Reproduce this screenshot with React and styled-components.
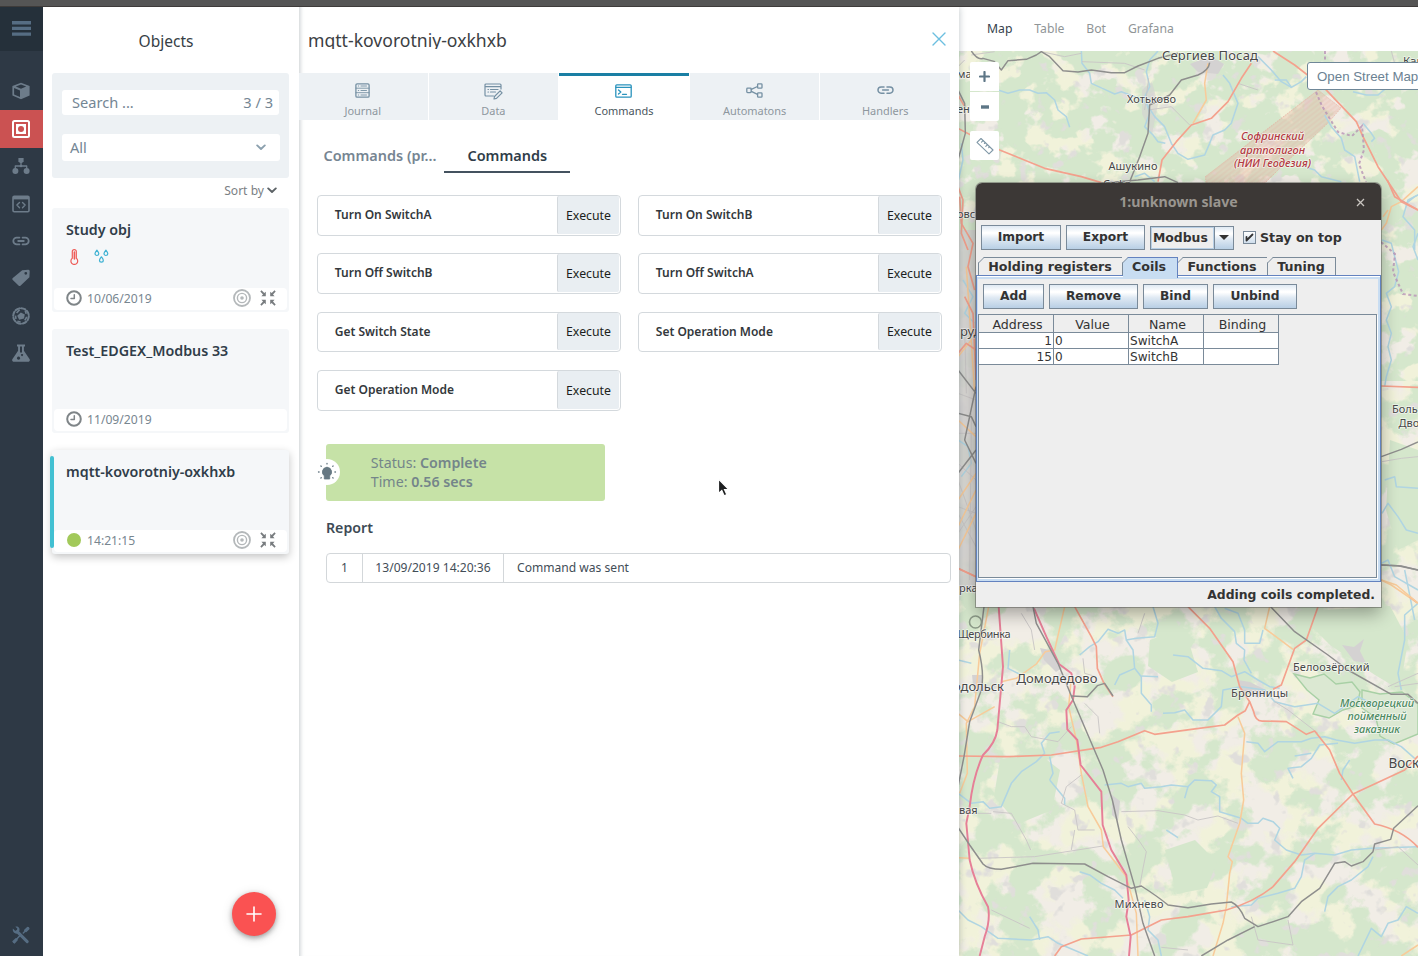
import React from "react";
import styled, { createGlobalStyle, css } from "styled-components";

const sans = `"Noto Sans", "Open Sans", sans-serif`;

const GlobalStyle = createGlobalStyle`
  * { box-sizing: border-box; }
  body { margin: 0; overflow: hidden; font-family: ${sans}; font-size: 14px; color: #3b4650; background: #fff; }
  button, input { font-family: inherit; }
`;

/* ---------- page frame ---------- */

const Page = styled.div`
  position: relative;
  display: flex;
  flex-direction: column;
  width: 1418px;
  height: 956px;
  overflow: hidden;
`;

const BrowserEdge = styled.div`
  flex: none;
  height: 7px;
  background: #555;
  border-bottom: 1px solid #3e3b3a;
`;

const Columns = styled.div`
  flex: 1;
  display: flex;
  min-height: 0;
`;

/* ---------- sidebar ---------- */

const Sidebar = styled.nav`
  flex: none;
  width: 43px;
  display: flex;
  flex-direction: column;
  background: #2e3945;
  color: #6d7c8a;
`;

const MenuButton = styled.div`
  height: 44px;
  padding: 0 0 1px;
  display: flex;
  align-items: center;
  justify-content: center;
  background: #25303a;
  color: #566d83;
  margin-bottom: 22px;
`;

const NavItem = styled.div`
  height: 37.4px;
  padding: 0 1px 0.6px 0;
  display: flex;
  align-items: center;
  justify-content: center;
  ${(p) => p.$active && css`background: #cb5252; color: #fff;`}
`;

const SidebarFooter = styled.div`
  margin-top: auto;
  height: 42px;
  padding-right: 2px;
  display: flex;
  justify-content: center;
  align-items: center;
  color: #566d83;
`;

/* ---------- objects list ---------- */

const ObjectsPanel = styled.section`
  position: relative;
  flex: none;
  width: 256px;
  padding: 0 10px 0 9px;
  display: flex;
  flex-direction: column;
  background: #fff;
`;

const PanelTitle = styled.h1`
  margin: 0;
  height: 66px;
  padding: 1px 9px 0 0;
  line-height: 66px;
  text-align: center;
  font-size: 15.5px;
  font-weight: 400;
  color: #363e45;
`;

const Filters = styled.div`
  height: 105px;
  padding: 17px 9px 17px 10px;
  display: flex;
  flex-direction: column;
  justify-content: space-between;
  background: #edf1f4;
  border-radius: 3px;
`;

const FilterField = styled.div`
  height: ${(p) => p.$height}px;
  padding: ${(p) => p.$pad};
  margin-right: ${(p) => p.$inset || 0}px;
  display: flex;
  align-items: center;
  justify-content: space-between;
  background: #fff;
  border-radius: 3px;
  font-size: 14.6px;
  color: #748694;
`;

const SortBy = styled.div`
  height: 30px;
  padding: 0 12px 6px 0;
  display: flex;
  align-items: center;
  justify-content: flex-end;
  gap: 3px;
  font-size: 12.1px;
  color: #7b8084;
`;

const CardList = styled.div`
  display: flex;
  flex-direction: column;
  gap: 17px;
`;

const Card = styled.article`
  position: relative;
  height: 104px;
  padding: 10px 2px 2px;
  display: flex;
  flex-direction: column;
  background: #f5f7f9;
  border-radius: 3px;
  ${(p) =>
    p.$selected &&
    css`
      box-shadow: 0 3px 9px rgba(0, 0, 0, 0.24);
      &::before {
        content: "";
        position: absolute;
        left: -2px;
        top: 6px;
        width: 4px;
        height: 92px;
        border-radius: 2px;
        background: #42c0d2;
      }
    `}
`;

const CardTitle = styled.h2`
  margin: 0;
  padding-left: 12px;
  line-height: 24px;
  font-size: 14.28px;
  font-weight: 600;
  color: #303d49;
`;

const Sensors = styled.div`
  display: flex;
  gap: 15px;
  padding: 7px 0 0 16px;
`;

const CardFooter = styled.div`
  margin-top: auto;
  height: 22px;
  padding: 0 11px 2px 12px;
  display: flex;
  align-items: center;
  background: #fff;
  border-radius: 4px;
  font-size: 12.15px;
  color: #788690;
`;

const CardTime = styled.span`
  flex: 1;
  padding-left: 5px;
`;

const Actions = styled.span`
  display: flex;
  align-items: center;
  gap: 9px;
`;

const OnlineDot = styled.span`
  width: 14px;
  height: 14px;
  margin: 0 1px;
  border-radius: 50%;
  background: #a2c95a;
`;

const AddButton = styled.button`
  position: absolute;
  right: 23px;
  bottom: 20px;
  width: 44px;
  height: 44px;
  padding: 0;
  display: flex;
  align-items: center;
  justify-content: center;
  border: 0;
  border-radius: 50%;
  background: #fa5252;
  box-shadow: 0 2px 5px rgba(0, 0, 0, 0.32), 0 2px 12px rgba(0, 0, 0, 0.14);
`;

/* ---------- details ---------- */

const Details = styled.section`
  position: relative;
  z-index: 1;
  flex: none;
  width: 660px;
  display: flex;
  flex-direction: column;
  background: #fff;
  box-shadow: 0 0 7px rgba(50, 70, 80, 0.32), inset 5px 0 4px -4px rgba(50, 70, 80, 0.28);
  clip-path: inset(0 -8px 0 0);
`;

const DetailsHeader = styled.header`
  height: 66px;
  padding: 0 13px 3px 9px;
  display: flex;
  align-items: center;
  justify-content: space-between;
`;

const DetailsTitle = styled.h1`
  margin: 0;
  height: 21px;
  line-height: 25px;
  overflow: hidden;
  font-size: 17.6px;
  font-weight: 400;
  color: #3c4043;
`;

const Tabs = styled.div`
  display: grid;
  grid-template-columns: repeat(5, 1fr);
  gap: 1px;
  height: 47px;
  margin: 0 9px 0 -1px;
`;

const Tab = styled.div`
  display: flex;
  flex-direction: column;
  align-items: center;
  justify-content: space-between;
  padding: ${(p) => (p.$active ? "8px" : "10px")} 0 1px;
  background: ${(p) => (p.$active ? "#fff" : "#edf1f4")};
  border-top: ${(p) => (p.$active ? "3px solid #1a7fa4" : "0")};
  color: ${(p) => (p.$active ? "#4a545c" : "#8d979e")};
  font-size: 10.95px;
  line-height: 16px;
  svg { color: ${(p) => (p.$active ? "#2a93bd" : "#7590a3")}; }
`;

const SubTabs = styled.div`
  display: flex;
  height: 53px;
  padding: 19px 0 0 16px;
`;

const SubTab = styled.div`
  width: ${(p) => p.$width}px;
  padding: 7px 0 0 ${(p) => p.$indent || 0}px;
  font-size: 14.45px;
  font-weight: 600;
  line-height: 20px;
  white-space: nowrap;
  color: ${(p) => (p.$active ? "#303d49" : "#768592")};
  border-bottom: ${(p) => (p.$active ? "2px solid #44525f" : "0")};
`;

const CommandGrid = styled.div`
  display: grid;
  grid-template-columns: 304px 304px;
  grid-auto-rows: 40.7px;
  gap: 17.6px 17px;
  padding: 22px 0 0 18px;
`;

const CommandCard = styled.div`
  display: flex;
  align-items: stretch;
  padding: 0 1px 1px 0;
  border: 1px solid #d4d9dd;
  border-radius: 4px;
`;

const CommandName = styled.div`
  flex: 1;
  padding-left: 16.8px;
  line-height: 38.5px;
  font-size: 12px;
  font-weight: 600;
  color: #33383c;
`;

const ExecuteButton = styled.button`
  width: 62px;
  padding: 1px 0 0;
  border: 0;
  border-left: 1px solid #d4d9dd;
  border-radius: 2px;
  background: #e9eef2;
  font-size: 12.3px;
  color: #1b1e20;
`;

const Status = styled.div`
  position: relative;
  width: 279px;
  height: 57px;
  margin: 33.4px 0 0 27px;
  padding: 9px 0 0 44.8px;
  background: #c6e2a7;
  border-radius: 3px;
  font-size: 14.22px;
  line-height: 19px;
  color: #74858a;
  b { font-weight: 600; }
`;

const StatusBadge = styled.div`
  position: absolute;
  left: -12px;
  top: 15px;
  width: 26px;
  height: 26px;
  border-radius: 50%;
  display: flex;
  align-items: center;
  justify-content: center;
  background: #fff;
`;

const ReportTitle = styled.h3`
  margin: 15.6px 0 15px 27px;
  line-height: 21px;
  font-size: 14.2px;
  font-weight: 600;
  color: #3d4a55;
`;

const ReportRow = styled.div`
  display: flex;
  width: 625px;
  height: 30px;
  margin-left: 27px;
  border: 1px solid #d3d7da;
  border-radius: 4px;
  font-size: 12.08px;
  line-height: 27px;
  color: #424d57;
`;

const ReportCell = styled.div`
  width: ${(p) => p.$width};
  text-align: ${(p) => p.$align || "left"};
  padding-left: ${(p) => p.$pad || 0}px;
  & + & { border-left: 1px solid #d3d7da; }
`;

/* ---------- map side ---------- */

const MapSide = styled.section`
  flex: 1;
  min-width: 0;
  display: flex;
  flex-direction: column;
`;

const MapTabs = styled.div`
  flex: none;
  height: 44px;
  padding: 0 0 2px 28px;
  display: flex;
  align-items: center;
  gap: 21.9px;
  background: #fff;
  font-size: 12.2px;
  color: #909597;
`;

const MapTab = styled.span`
  color: ${(p) => (p.$active ? "#36424d" : "inherit")};
`;

const MapArea = styled.div`
  position: relative;
  flex: 1;
  min-height: 0;
  background: #f0ede5;
`;

const MapCanvas = styled.svg`
  display: block;
`;

const MapTools = styled.div`
  position: absolute;
  left: 11px;
  top: 11px;
  width: 29px;
  display: flex;
  flex-direction: column;
`;

const MapTool = styled.div`
  height: 29px;
  margin-top: ${(p) => p.$gap || 0}px;
  display: flex;
  align-items: center;
  justify-content: center;
  background: #fff;
  color: #5d7686;
  border-radius: ${(p) => p.$radius || "2px"};
`;

const LayerPicker = styled.div`
  position: absolute;
  left: 348px;
  top: 11px;
  width: 130px;
  height: 28px;
  padding-left: 9px;
  line-height: 27px;
  font-family: "Liberation Sans", Arial, sans-serif;
  font-size: 13.3px;
  color: #6b8293;
  background: #fff;
  border: 1px solid #6f8798;
  border-radius: 3px;
`;

/* ---------- floating desktop window ---------- */

const Window = styled.div`
  position: absolute;
  z-index: 3;
  left: 976px;
  top: 183px;
  width: 405px;
  height: 424px;
  display: flex;
  flex-direction: column;
  background: #eee;
  border-radius: 6px 6px 0 0;
  box-shadow: 0 0 0 1px rgba(90, 90, 85, 0.5), 0 7px 17px rgba(0, 0, 0, 0.33);
  font-family: "DejaVu Sans", Verdana, sans-serif;
  font-weight: 700;
  font-size: 12.3px;
  color: #333;
  white-space: nowrap;
`;

const TitleBar = styled.div`
  flex: none;
  position: relative;
  height: 37px;
  display: flex;
  align-items: center;
  justify-content: center;
  background: #3c3836;
  border-radius: 6px 6px 0 0;
  font-family: ${sans};
  font-size: 14.2px;
  color: #99958f;
`;

const CloseIcon = styled.svg`
  position: absolute;
  right: 16px;
  top: 14.5px;
`;

const Toolbar = styled.div`
  flex: none;
  display: flex;
  align-items: center;
  gap: 5px;
  padding: ${(p) => p.$pad};
`;

const metal = "linear-gradient(#dfe9f3 0%, #ffffff 28%, #ffffff 32%, #dfe9f3 55%, #b8cfe5 100%)";

const SwingButton = styled.button`
  width: ${(p) => p.$width}px;
  height: 25px;
  padding: 0;
  border: 1px solid #7a8a99;
  background: ${metal};
  font-weight: 700;
  font-size: 12.25px;
  line-height: 23px;
  color: #333;
`;

const Combo = styled.div`
  display: flex;
  width: 84px;
  height: 24px;
  border: 1px solid #7a8a99;
  margin-right: 4px;
`;

const ComboValue = styled.div`
  flex: 1;
  padding-left: 1px;
  line-height: 19px;
  font-size: 12.4px;
  border: 1px solid #b8cfe5;
`;

const ComboArrow = styled.div`
  width: 19px;
  display: flex;
  align-items: center;
  justify-content: center;
  border-left: 1px solid #7a8a99;
  background: ${metal};
`;

const CheckBox = styled.span`
  width: 13px;
  height: 13px;
  border: 1px solid #7a8a99;
  background: linear-gradient(#fff, #cfdeec);
  display: flex;
  align-items: center;
  justify-content: center;
`;

const CheckLabel = styled.span`
  margin-left: -1px;
  font-size: 12.65px;
`;

const SwingTabs = styled.div`
  flex: none;
  display: flex;
  height: 18px;
  margin-top: 7px;
  padding-left: 2px;
`;

const SwingTab = styled.div`
  position: relative;
  width: ${(p) => p.$width}px;
  height: ${(p) => (p.$active ? 21 : 18)}px;
  z-index: ${(p) => (p.$active ? 2 : 0)};
  padding-right: ${(p) => (p.$active ? 2 : 1)}px;
  text-align: center;
  font-size: 12.65px;
  line-height: 18px;
  border-top: 1px solid ${(p) => (p.$active ? "#6382bf" : "#7a8a99")};
  border-right: 1px solid ${(p) => (p.$active ? "#6382bf" : "#7a8a99")};
  border-left: ${(p) => (p.$first ? "1px solid #7a8a99" : "0")};
  background: ${(p) => (p.$active ? "#c8ddf2" : "#eee")};
`;

const TabCorner = styled.svg`
  position: absolute;
  left: -1px;
  top: -1px;
`;

const TabPane = styled.div`
  flex: none;
  height: 307px;
  border: 1px solid #6382bf;
  background: #c8ddf2;
  padding: 1px 2px 2px 1px;
  box-shadow: inset 0 1px 0 #fff;
`;

const PaneBody = styled.div`
  height: 100%;
  display: flex;
  flex-direction: column;
  background: #eee;
  border-top: 2px solid #c8ddf2;
`;

const TableBox = styled.div`
  flex: 1;
  margin: 0 1px 1px 0;
  border: 1px solid #7a8a99;
  box-shadow: 1px 1px 0 #fff;
  font-weight: 400;
`;

const TableLine = styled.div`
  display: grid;
  grid-template-columns: repeat(4, 75px);
  grid-template-rows: ${(p) => (p.$head ? 18 : 16)}px;
  line-height: ${(p) => (p.$head ? 19 : 16)}px;
  font-size: ${(p) => (p.$head ? 12.6 : 12.1)}px;
  text-align: ${(p) => (p.$head ? "center" : "left")};
`;

const TableCell = styled.div`
  min-height: 0;
  height: 100%;
  padding: ${(p) => (p.$head ? "0 0 0 3px" : "0 1px")};
  background: ${(p) => (p.$head ? "#eee" : "#fff")};
  text-align: ${(p) => p.$align || "inherit"};
  border-right: 1px solid #7a8a99;
  border-bottom: 1px solid #7a8a99;
`;

const StatusLine = styled.div`
  flex: 1;
  padding-right: 6px;
  line-height: 26px;
  text-align: right;
  font-size: 12.4px;
`;

const Cursor = styled.svg`
  position: absolute;
  z-index: 4;
  left: 716px;
  top: 477px;
`;

/* ---------- icons ---------- */

const Icon = ({ size = 18, w, h, box = "0 0 18 18", stroke, sw = 1.4, children }) => (
  <svg
    width={w || size}
    height={h || size}
    viewBox={box}
    fill={stroke ? "none" : "currentColor"}
    stroke={stroke ? "currentColor" : "none"}
    strokeWidth={sw}
    strokeLinecap="round"
    strokeLinejoin="round"
  >
    {children}
  </svg>
);

const MenuIcon = () => (
  <Icon w={19} h={15} box="0 0 19 15"><path d="M0 0h19v3.4H0zM0 5.7h19v3.4H0zM0 11.4h19v3.4H0z" /></Icon>
);
const CubeIcon = () => (
  <Icon>
    <path d="M9 .8 17.6 4v9.6L9 17.2.4 13.6V4Zm0 1.8L3.8 4.5 9 6.7l5.2-2.2ZM2.1 6v6.5L8 14.9V8.4Z" fillRule="evenodd" />
  </Icon>
);
const ObjectIcon = () => (
  <Icon>
    <rect x="1" y="1" width="16" height="16" rx="1.5" fill="none" stroke="currentColor" strokeWidth="2" />
    <rect x="4" y="4" width="10" height="10" />
    <circle cx="9" cy="9" r="3" fill="#cb5252" />
  </Icon>
);
const TreeIcon = () => (
  <Icon>
    <path d="M6.4 1h5.2v3.2L10 6H8L6.4 4.2Z" />
    <path d="M9 5v4M3.3 12V9h11.4v3" fill="none" stroke="currentColor" strokeWidth="1.3" />
    <circle cx="3.4" cy="14" r="3" /><circle cx="14.6" cy="14" r="3" />
    <circle cx="9" cy="9" r="1.3" />
  </Icon>
);
const CodeIcon = () => (
  <Icon>
    <rect x="1" y="1.2" width="16" height="15.6" rx="1.2" fill="none" stroke="currentColor" strokeWidth="1.6" />
    <path d="M1 1.2h16v3.2H1z" />
    <path d="m7.500 7.500-2.600 2.600 2.600 2.600M10.500 7.500l2.600 2.600-2.600 2.600" fill="none" stroke="currentColor" strokeWidth="1.4" />
  </Icon>
);
const LinkIcon = () => (
  <Icon stroke sw={1.8}>
    <path d="M7.400 5.600H4.700a3.400 3.400 0 0 0 0 6.800h2.700M10.600 5.600h2.700a3.400 3.400 0 0 1 0 6.800h-2.700M6.200 9h5.600" />
  </Icon>
);
const TagIcon = () => (
  <Icon>
    <path d="M10.2 1.2 16 .8a1.6 1.6 0 0 1 1.7 1.7l-.3 5.7-8.700 8.400a1.6 1.6 0 0 1-2.200 0L.8 11a1.5 1.5 0 0 1 0-2.100Zm3.600 1.700a1.4 1.4 0 1 0 0 2.800 1.4 1.4 0 0 0 0-2.800Z" fillRule="evenodd" />
  </Icon>
);
const SphereIcon = () => (
  <Icon>
    <circle cx="9" cy="9" r="7.800" fill="none" stroke="currentColor" strokeWidth="2" strokeDasharray="4.200 1.930" />
    <path d="m8.800 5.600 4 1.800-.8 4.200-4.800 1.200-2-4Z" />
    <g fill="none" stroke="currentColor" strokeWidth="1.700" strokeLinecap="butt">
      <path d="M7.600 2.600 4.600 6M13.200 3.600l1 3.200M14.800 9.800l-2 3.600M8.600 15l-3.200-.8M3.400 8.600l.6 3.200" />
    </g>
  </Icon>
);
const FlaskIcon = () => (
  <Icon>
    <path d="M5 .6h8v1.8h-1.100v4.400l5.600 8.300c.9 1.300 0 2.600-1.400 2.600H1.900c-1.400 0-2.300-1.300-1.400-2.600l5.600-8.300V2.400H5Zm3 1.800v6.200h2V2.400ZM10 10a1 1 0 1 0 .1 0ZM6.500 12.600a1.600 1.600 0 1 0 .1 0Z" fillRule="evenodd" />
  </Icon>
);
const ToolsIcon = () => (
  <Icon>
    <path d="m5.200 5.600 10 10" stroke="currentColor" strokeWidth="3" strokeLinecap="round" />
    <path d="M.9 2.600 3.100 4.800l1.700-.4.5-1.800L3.400.8c2.500-.8 4.800 1.200 4 4L5 7.600C2.400 8 .2 5.400.9 2.600Z" />
    <path d="M16.500 1.700 11.300 7M1.800 16.200 8 9.600" stroke="currentColor" strokeWidth="1.500" />
    <path d="m12.700 4.200 2.900-2.800 1.300 1.300-2.900 2.900ZM1 15.400l3-2.700 1.200 1.200-2.700 3Z" stroke="currentColor" />
  </Icon>
);

const JournalIcon = () => (
  <Icon size={15} box="0 0 15 15" stroke sw={1.300}>
    <rect x=".9" y=".9" width="13.200" height="13.200" rx="1.200" />
    <path d="M1 5.200h13M1 9.700h13M3.300 3h.4M6 3h5.500M3.300 7.500h.4M6 7.500h5.500M3.300 12h.4M6 12h5.500" strokeWidth=".9" />
  </Icon>
);
const DataIcon = () => (
  <Icon w={19} h={17} box="0 0 19 17" stroke sw={1.200}>
    <path d="M9.500 13H2a1 1 0 0 1-1-1V2a1 1 0 0 1 1-1h14a1 1 0 0 1 1 1v4M1 3.600h16M4 6.500h.5M6.500 6.500H14M4 9h.5M6.500 9h5" />
    <path d="m10.500 13.500 5.600-5.700 2 2-5.600 5.600-2.500.6Z" />
  </Icon>
);
const CommandIcon = () => (
  <Icon w={17} h={14} box="0 0 17 14" stroke sw={1.300}>
    <rect x=".8" y=".8" width="15.400" height="12.400" rx="1" />
    <path d="M1 3.300h15" /><path d="m3.500 6 2.300 2-2.300 2M7.500 10.300h4" />
  </Icon>
);
const AutomatonIcon = () => (
  <Icon w={17} h={15} box="0 0 17 15" stroke sw={1.300}>
    <rect x=".8" y="5.200" width="4.400" height="4.400" rx=".8" />
    <rect x="11.600" y=".8" width="4.400" height="4.400" rx=".8" />
    <rect x="11.600" y="9.800" width="4.400" height="4.400" rx=".8" />
    <path d="m5.300 6.400 6.200-2.900M5.300 8.400l6.200 3" />
  </Icon>
);
const HandlerIcon = () => (
  <Icon w={17} h={14} box="0 0 17 14" stroke sw={1.500}>
    <path d="M7 4H4.100a3 3 0 0 0 0 6.200H7M10 4h2.900a3 3 0 0 1 0 6.200H10M5.600 7.100h5.800" />
  </Icon>
);

const ClockIcon = () => (
  <Icon size={16} box="0 0 16 16" stroke sw={2}>
    <g stroke="#7f8588"><circle cx="8" cy="8" r="6.800" /><path d="M8.300 4.800v3.700H5" strokeWidth="1.500" /></g>
  </Icon>
);
const TargetIcon = () => (
  <Icon size={18} stroke sw={1.400}>
    <g stroke="#b4b8ba"><circle cx="9" cy="9" r="8" strokeWidth="1.800" /><circle cx="9" cy="9" r="4.600" /></g>
    <circle cx="9" cy="9" r="1.800" fill="#b4b8ba" stroke="none" />
  </Icon>
);
const CollapseIcon = () => (
  <Icon size={16} box="0 0 16 16">
    <g fill="#787c7f">
      <path d="M.3 1.500 1.500.3 4.300 3.100 5.800 1.800V6.200H1.400L3 4.400Z" />
      <path d="M15.700 1.500 14.500.3l-2.800 2.800-1.500-1.300v4.400h4.400L13 4.400Z" />
      <path d="M.3 14.500l1.200 1.200 2.800-2.800 1.500 1.300V9.800H1.400L3 11.600Z" />
      <path d="m15.700 14.500-1.200 1.200-2.800-2.800-1.500 1.300V9.800h4.400L13 11.600Z" />
    </g>
  </Icon>
);
const ThermoIcon = () => (
  <Icon w={9} h={16} box="0 0 9 16" stroke sw={1.200}>
    <g stroke="#ee5b57">
      <path d="M2.300 9.300V2.600a2 2 0 0 1 4 0v6.700a3.400 3.400 0 1 1-4 0Z" />
      <path d="M4.400 3v7" strokeWidth="1.600" />
    </g>
  </Icon>
);
const DropsIcon = () => (
  <Icon w={15} h={14} box="0 0 15 14" stroke sw={1.200}>
    <g stroke="#3fb2d3">
      <path d="M2.900 1.200C1.500 3.100 1 3.800 1 4.600a1.900 1.900 0 0 0 3.800 0c0-.8-.5-1.500-1.900-3.400ZM11.900 1.200C10.500 3.100 10 3.800 10 4.600a1.900 1.900 0 0 0 3.800 0c0-.8-.5-1.500-1.900-3.400ZM7.400 7.800C6 9.700 5.500 10.300 5.500 11.200a1.900 1.900 0 0 0 3.800 0c0-.9-.5-1.500-1.900-3.400Z" />
    </g>
  </Icon>
);
const Chevron = ({ color }) => (
  <Icon w={10} h={8} box=".5 0 10 8" stroke sw={1.900}><path d="m1.700 2.400 3.800 3.600 3.800-3.600" stroke={color} /></Icon>
);
const BulbIcon = () => (
  <Icon size={20} box="0 0 20 20">
    <g fill="#667883" stroke="#667883">
      <path d="M10 5.300a4.700 4.700 0 0 0-2.700 8.500V17h5.400v-3.200A4.700 4.700 0 0 0 10 5.300Z" strokeWidth=".8" />
      <path d="M10 1.300v.6M1.500 10h.6M17.900 10h.6M3.900 4l.4.400M16.100 4l-.4.400M3.900 16l.4-.4M16.100 16l-.4-.4" strokeWidth="1.300" strokeLinecap="round" />
    </g>
  </Icon>
);

/* ---------- map ---------- */

const topPaths = {
  river: [
    "M370 153 L372 190 L395 220 L400 250 L440 268 L470 282 L490 275 L530 290 L565 310 L590 350 L620 380 L640 430 L660 460 L690 478 L740 465 L755 430 L765 405 L800 390 L820 370 L840 310 L815 250 L795 225",
    "M120 270 L150 280 L185 270 L215 270 L240 280 L265 278 L290 300 L300 330 L325 350 L335 382",
    "M600 153 L575 180 L565 215 L575 260 L560 290 L575 340 L560 380 L585 405 L600 425 L622 430",
    "M900 170 L940 210 L970 245 L1000 262 L1030 245 L1045 230",
    "M950 240 L985 240 L1000 262",
    "M1100 345 L1120 380 L1150 415 L1160 450 L1190 470 L1205 545",
    "M1215 370 L1240 400 L1250 415 L1240 425",
    "M1185 275 L1225 285 L1260 285 L1290 260",
    "M1380 585 L1350 600 L1335 650 L1370 690 L1370 750",
    "M530 530 L560 520 L590 545",
    "M1040 500 L1070 510 L1090 530 L1150 545",
    "M0 545 L15 480 L10 430",
  ],
  minor: [
    "M40 165 L110 155 M250 155 L320 170 L370 160 M372 185 L500 190 L560 210 M570 330 L640 320 L695 375 M572 235 L560 330 M840 250 L900 270 M0 200 L20 180 M1300 153 L1310 190",
  ],
  rail: [
    "M40 153 Q60 182 75 175 L108 184 L130 210 L150 182 L205 178 L235 165 L250 155 L275 170 L315 212 L360 216 L400 210 L460 218 L500 218 L540 198 L600 175 L660 160",
    "M755 188 Q752 212 720 225 L670 240 L635 285 L575 315 L570 400 L545 470 L515 545",
    "M430 550 L540 540 L620 530 L660 548",
    "M0 270 L20 310 L22 400 L0 480",
  ],
  orange: ["M750 190 L740 250 L745 300 L705 370", "M1380 560 L1330 605 L1300 620 L1285 670 L1270 690"],
  red: [
    "M880 190 L850 235 L810 305 L760 355 L700 375 L655 425 L612 480 L600 545",
    "M945 153 L1010 195 L1100 265 L1195 365 L1215 410 L1260 500 L1330 605 L1380 630",
    "M0 385 L125 450 L260 505 L370 530 L430 548",
    "M0 285 L20 320", "M0 560 L15 600 L10 700 L30 750",
  ],
};

const middlePaths = {
  river: [
    "M1330 60 L1345 70 L1370 50 L1380 45",
    "M1272 180 L1300 190 L1310 230 L1322 275 L1310 320 L1285 340 L1300 380 L1285 420 L1300 460 L1290 500 L1300 540 L1285 590 L1280 620",
    "M1380 160 L1365 200 L1380 240",
    "M1280 900 L1310 890 L1315 920 L1380 925",
    "M1272 1000 L1290 970 L1320 1010 L1345 1050 L1380 1060",
    "M1340 1170 L1350 1220 L1370 1320",
    "M15 300 L45 350 L20 400 L50 430 M0 780 L30 800 L40 850 L10 890",
  ],
  minor: [
    "M1272 845 L1330 835 L1380 830 M0 640 L54 660 M0 980 L54 1000 M0 850 L54 900 M20 450 L25 640 M0 1000 L54 1100 M0 900 L54 1050 M40 700 L35 1200 M0 760 L54 760 M0 1060 L54 980",
  ],
  rail: [
    "M1270 830 L1330 808 L1380 786", "M1270 1155 L1320 1157 L1380 1170",
    "M0 570 L54 640 M54 620 L20 780 L54 850 M0 700 L40 710 L54 740 M0 880 L54 810",
  ],
  orange: ["M1290 90 L1275 110", "M0 1110 L54 1000 M0 960 L54 880 M0 1040 L54 930 M0 720 L54 770 M25 260 L50 640 M0 530 L40 480", "M1270 1200 L1300 1215 L1380 1270"],
  red: [
    "M1270 618 L1380 622", "M1288 0 L1310 50 L1380 90", "M0 1165 L54 1190", "M5 50 L10 130 L45 190 L30 260 L50 330",
    "M1355 1250 L1380 1270", "M20 350 L45 400 L54 600", "M0 520 L25 490 L54 510",
  ],
};

const bottomPaths = {
  river: [
    "M365 345 L395 320 L420 305 L450 268 L480 280 L500 270 L505 300 L535 295 L590 290 L600 250 L585 200",
    "M505 300 L525 330 L530 385 L550 410 L550 460 L580 495 L580 515",
    "M470 435 L485 405 L530 385",
    "M550 408 L600 410",
    "M645 345 L690 350 L735 385 L790 392 L820 410 L860 395 L900 420 L935 440 L965 445",
    "M770 200 L790 235 L830 275 L835 310 L860 330 L858 360 L880 400",
    "M800 205 L840 220 L860 270 L860 310 L905 310 L915 270",
    "M615 520 L650 518 L680 510 L705 540 L750 540 L790 500 L795 450 L850 440 L920 450 L950 485 L1010 500 L1080 490 L1130 520 L1200 470 L1260 500",
    "M865 605 L900 610 L920 635 L960 605 L1030 605 L1060 595 L1100 590 L1135 600 L1190 610 L1250 600 L1290 600 L1330 620 L1370 655",
    "M1140 610 L1085 615 L1060 655 L1030 680 L990 685 L1005 715",
    "M1175 660 L1155 690 L1150 720",
    "M440 735 L490 730 L510 740 L550 730 L560 745 L610 740 L640 735 L690 740 L710 720 L760 722 L775 735 L760 755 L785 770 L785 815 L850 835 L870 850 L900 850 L915 835 L945 845 L965 865 L950 900 L985 930 L1030 945 L1070 940 L1130 945 L1180 930 L1240 925 L1380 920",
    "M690 740 L680 775",
    "M275 650 L285 700 L275 720 M275 720 L320 775 L320 795",
    "M305 575 L275 580 L250 610 L260 640 L235 665 L190 695 L160 730 L130 800 L95 805 L75 785 L40 790 L0 760",
    "M1070 940 L1040 960 L1030 1010 L1010 1045 L960 1060 L900 1075 L880 1095 L820 1100",
    "M1245 950 L1230 980 L1180 1020 L1140 1040 L1110 1070 L1100 1115",
    "M365 995 L395 1005 L430 1030 L470 1050 L495 1075",
    "M560 1080 L575 1130 L570 1170 L600 1200 L610 1248",
    "M0 1110 L30 1140 L70 1160 L120 1195 L220 1200 L270 1190 L300 1210 L390 1248",
    "M215 1130 L240 1170 L245 1200",
    "M1380 1120 L1345 1100 L1320 1140 L1290 1150 L1270 1190 L1240 1165 L1200 1248",
    "M1380 190 L1340 225 L1340 300 L1320 400 L1330 450",
    "M155 330 L150 385 L190 405 M0 360 L40 370",
    "M625 870 L660 893 M1010 648 L1060 640",
    "M1270 70 L1290 60 L1310 110 L1380 150",
  ],
  minor: [
    "M375 355 L380 400 L415 410 M190 220 L220 270 L230 330 M490 815 L600 812 L680 825 L720 840 L780 828 L840 850 M510 860 L545 905 L565 935 L555 985 L545 1040 M435 918 L230 950 L60 955 M120 545 L160 560 L200 560 L220 590 L300 605 L340 560 M380 490 L420 530 L425 580 M350 870 L340 930 M310 790 L350 810 L360 870 L410 870 M310 790 L325 740 L370 705 M950 485 L990 510 L1080 580 M880 1130 L900 1200 L1005 1215 L990 1140 M1250 930 L1320 920 L1380 975 M105 815 L160 820 L205 900 L218 930 M100 1110 L215 1165 M1310 440 L1380 430 M540 280 L560 220 M1380 400 L1290 440 M610 1222 L690 1230 M0 820 L100 820",
  ],
  orange: [
    "M320 200 L290 330 L262 335 L235 372 L175 415 L130 425",
    "M340 410 L332 500 L355 600 L370 700 L390 800 L430 870 L436 920 L505 1010 L535 1120 L540 1248",
    "M840 530 L860 580 L850 700 L857 780 L845 850 L810 950 L823 965 L815 1000 L805 1100 L795 1150 L765 1248",
    "M935 200 L920 265 L1005 328", "M1270 120 L1315 135 L1380 190",
    "M92 200 L65 340 L50 500 L25 550 L28 700 L5 760", "M110 500 L30 545 L0 520", "M0 953 L35 955", "M1330 1248 L1380 1215",
  ],
  red: [
    "M350 200 L400 290 L415 320 L418 385 L438 430 L465 470",
    "M0 648 L150 650 L280 645 L430 622 L480 605 L560 572 L590 583 L700 568 L800 555 L840 525 L862 512 L875 485 L887 515 Q892 545 915 543 L985 545 L1045 583 L1070 573 L1115 630 L1145 700 L1185 762 L1250 852 Q1330 868 1380 922",
    "M690 200 L755 265 L825 365 L845 440 L875 485",
    "M1080 200 L1045 300 L1010 325 L970 435 L945 448",
    "M1380 648 L1340 690 L1185 762 L1080 865 L1010 965 L945 1040 Q890 1085 805 1110 L690 1130 L610 1140 L520 1185 L370 1197 L310 1220 L290 1248",
    "M0 85 L54 110",
  ],
  motorway: [
    "M122 200 L135 380 L118 570 Q112 610 75 645 Q45 710 35 800 L25 850 L35 960 Q50 1030 90 1100 Q98 1140 80 1190 L65 1248",
    "M228 205 L265 290 L303 372 L340 400 L350 440 L345 480 L325 510 L328 568 L358 600 L368 675 L430 755 L434 855 L460 930 L505 1005 L512 1080 L505 1130 L518 1190 L513 1248",
  ],
  rail: [
    "M225 200 L235 250 L300 370 L345 480 L405 620 L435 690 L463 780 L490 900 L530 1040 L555 1150 L590 1248",
    "M78 200 L62 330 Q80 400 70 450 L35 545 L18 650 L0 740",
    "M0 862 L35 915 L75 972 Q90 988 130 988 L225 970 L380 972 L450 1010 L520 1045 L550 1038 Q600 1070 630 1095 L690 1103 L760 1092 L820 1086 Q845 1098 860 1135 L900 1160 L990 1130 L1030 1085 L1085 1045 L1130 970 L1160 965 L1180 978 L1215 965 L1245 935 L1250 912 L1298 898 L1307 865 L1380 797",
    "M730 1248 L810 1200 L890 1160",
    "M938 200 L1010 275 L1110 345 L1170 390 L1300 463 L1350 463 L1380 490",
    "M340 468 L388 470 L418 437 L440 430 L465 468", "M1270 75 L1330 78 L1380 90",
  ],
};

const roadStyle = {
  river: { stroke: "#b0d5e2", strokeWidth: 4.6 },
  minor: { stroke: "#c9c6c6", strokeWidth: 2.8 },
  orange: { stroke: "#f8cb9a", strokeWidth: 4.6 },
  red: { stroke: "#f4a18d", strokeWidth: 5 },
  motorway: { stroke: "#e67f97", strokeWidth: 5.8 },
  rail: { stroke: "#8e8e8d", strokeWidth: 4.4 },
};

const Roads = ({ paths, y }) => (
  <g transform={`translate(958 ${y}) scale(.33333)`} fill="none" strokeLinejoin="round">
    {Object.keys(roadStyle).map((kind) => (
      <g key={kind} {...roadStyle[kind]}>
        {(paths[kind] || []).map((d, i) => <path key={i} d={d} />)}
      </g>
    ))}
  </g>
);

const labels = [
  ["Сергиев Посад", 1162, 60, 13, 96], ["Хотьково", 1127, 103, 11, 49], ["Ашукино", 1108.5, 170, 11, 49],
  ["Кар", 1403, 65, 11.5], ["ма", 957, 78, 11], ["ен", 957, 113, 11], ["овс", 957, 218, 11], ["Софр", 1103, 188, 11],
  ["руд", 960, 336, 13], ["арка", 953, 592, 11], ["Боль", 1392, 413, 11], ["Дво", 1398.5, 426.5, 11],
  ["Щербинка", 957.5, 638, 11, 53], ["одольск", 953, 691, 13, 51], ["Домодедово", 1016.5, 683, 13, 81],
  ["вая", 959, 814, 11], ["Белоозёрский", 1293, 671, 11, 76.5], ["Бронницы", 1231, 697, 11, 57],
  ["Воск", 1388.5, 768, 13.5], ["Михнево", 1114.5, 908, 11, 49],
];

const MapDrawing = () => (
  <MapCanvas width="459" height="905" viewBox="959 51 459 905" fontFamily={sans}>
    <defs>
      <filter id="forest" x="0" y="0" width="1" height="1" colorInterpolationFilters="sRGB">
        <feTurbulence type="fractalNoise" baseFrequency=".024 .026" numOctaves="5" seed="11" />
        <feColorMatrix values="0 0 0 0 0  0 0 0 0 0  0 0 0 0 0  12 0 0 0 -5.700" />
        <feComposite in="SourceGraphic" operator="in" />
      </filter>
      <filter id="forestTop" x="0" y="0" width="1" height="1" colorInterpolationFilters="sRGB">
        <feTurbulence type="fractalNoise" baseFrequency=".04 .045" numOctaves="4" seed="5" />
        <feColorMatrix values="0 0 0 0 0  0 0 0 0 0  0 0 0 0 0  11 0 0 0 -4.300" />
        <feComposite in="SourceGraphic" operator="in" />
      </filter>
      <filter id="farm" x="0" y="0" width="1" height="1" colorInterpolationFilters="sRGB">
        <feTurbulence type="fractalNoise" baseFrequency=".025" numOctaves="4" seed="31" />
        <feColorMatrix values="0 0 0 0 0  0 0 0 0 0  0 0 0 0 0  0 9 0 0 -4" />
        <feComposite in="SourceGraphic" operator="in" />
      </filter>
      <filter id="town" x="0" y="0" width="1" height="1" colorInterpolationFilters="sRGB">
        <feTurbulence type="fractalNoise" baseFrequency=".06" numOctaves="3" seed="8" />
        <feColorMatrix values="0 0 0 0 0  0 0 0 0 0  0 0 0 0 0  0 0 9 0 -5.700" />
        <feComposite in="SourceGraphic" operator="in" />
      </filter>
      <pattern id="hatch" width="4" height="4" patternUnits="userSpaceOnUse" patternTransform="rotate(-38)">
        <path d="M0 2h4" stroke="#e8ab9c" strokeWidth=".3" />
      </pattern>
    </defs>
    <rect x="959" y="51" width="459" height="905" fill="#f1ede6" />
    <rect x="959" y="51" width="459" height="905" fill="#f1f2da" filter="url(#farm)" />
    <rect x="959" y="51" width="459" height="330" fill="#d5e7cc" filter="url(#forestTop)" />
    <rect x="959" y="380" width="459" height="576" fill="#d5e7cc" filter="url(#forest)" />
    <rect x="959" y="51" width="459" height="905" fill="#e0dedb" filter="url(#town)" />
    <g fill="#d5e7cc">
      <path d="M1325 610 L1390 606 L1408 640 L1400 690 L1375 675 L1330 645 L1310 625Z" />
      <path d="M1390 440 l28 10 v90 l-20 10 l-12 -40Z" />
      <path d="M1150 640 l22 -8 l18 14 l8 26 l-26 10 l-24 -16Z" />
      <path d="M1000 760 l34 -10 l26 20 l-8 40 l-34 14 l-24 -28Z" />
      <path d="M1165 850 l30 -10 l22 22 l-10 26 l-30 6Z" />
    </g>
    <g fill="#d4d2d2">
      <path d="M959 230 l17 0 v360 l-17 0Z" opacity=".8" />
      <path d="M1342 645 l12 2 l10 -8 l-4 12 l6 12 l-12 -2Z" />
      <path d="M1190 64 l20 -8 l14 8 l-6 10 l-20 -2Z" /><path d="M1142 90 l10 -8 l6 22 l-6 30 l-10 -20Z" opacity=".6" />
      <path d="M1040 648 l10 2 l12 18 l-6 4 l-12 -12Z" /><path d="M1238 680 l12 2 l20 10 l-12 6 l-18 -8Z" />
      <path d="M1112 795 l8 6 l-2 20 l-6 -6Z" /><path d="M972 675 l10 0 l2 16 l-10 2Z" />
    </g>
    <path
      d="M1294 674l16 4 14-4 12 10 16-2 8 10-3 14-14 4-14 8-16-4 6-14-12-10ZM1362 690l18 4 22-2 16 12v30l-24 10-14-8-4-18-14-10Z"
      fill="#dbe8d2" stroke="#a8d0a5" strokeWidth="1.4"
    />
    <path d="M1205.5 176.500 1318 90 1341 108 1328 123 1278 170 1265 183h-59Z" fill="#e8b0a050" stroke="#e8ab9c" strokeWidth=".6" strokeDasharray="1.500 1" />
    <path d="M1205.5 176.500 1318 90 1341 108 1328 123 1278 170 1265 183h-59Z" fill="url(#hatch)" />
    <Roads paths={topPaths} y={0} />
    <Roads paths={middlePaths} y={180} />
    <Roads paths={bottomPaths} y={540} />
    <g fill="none" stroke="#b58fb5" strokeWidth="2" strokeDasharray="3 2.5" opacity=".75">
      <path d="M1325 51v12M1316 92l6 14 16 26 14 4 10-10 2 24-5 14 7 18" />
      <path d="M1381 242l14 12-2 18 10 22 15 2" />
    </g>
    <circle cx="975.5" cy="622" r="6" fill="none" stroke="#8c9a88" strokeWidth="1.600" />
    <g fill="#484848" stroke="#fff" strokeOpacity=".65" strokeWidth="1.6" paintOrder="stroke" strokeLinejoin="round">
      {labels.map(([text, x, y, size, length]) => (
        <text key={text} x={x} y={y} fontSize={size} textLength={length}>{text}</text>
      ))}
      <g fill="#b33a42" fontSize="11" fontStyle="italic" fontWeight="500" textAnchor="middle">
        <text x="1272.5" y="140" textLength="63">Софринский</text>
        <text x="1272.5" y="153.5" textLength="65">артполигон</text>
        <text x="1272.5" y="167" textLength="77">(НИИ Геодезия)</text>
      </g>
      <g fill="#4d8a61" fontSize="11" fontStyle="italic" fontWeight="500" textAnchor="middle">
        <text x="1377" y="707" textLength="74">Москворецкий</text>
        <text x="1377" y="720" textLength="59">пойменный</text>
        <text x="1377" y="733" textLength="46">заказник</text>
      </g>
    </g>
  </MapCanvas>
);

/* ---------- data ---------- */

const nav = [CubeIcon, ObjectIcon, TreeIcon, CodeIcon, LinkIcon, TagIcon, SphereIcon, FlaskIcon];

const objects = [
  { name: "Study obj", time: "10/06/2019", sensors: true, actions: true },
  { name: "Test_EDGEX_Modbus 33", time: "11/09/2019" },
  { name: "mqtt-kovorotniy-oxkhxb", time: "14:21:15", online: true, actions: true, selected: true },
];

const tabs = [
  ["Journal", JournalIcon], ["Data", DataIcon], ["Commands", CommandIcon], ["Automatons", AutomatonIcon], ["Handlers", HandlerIcon],
];

const commands = [
  "Turn On SwitchA", "Turn On SwitchB", "Turn Off SwitchB", "Turn Off SwitchA",
  "Get Switch State", "Set Operation Mode", "Get Operation Mode",
];

const swingTabs = [["Holding registers", 145], ["Coils", 55], ["Functions", 90], ["Tuning", 68]];
const coilButtons = [["Add", 61], ["Remove", 89], ["Bind", 65], ["Unbind", 84]];
const coils = [["1", "0", "SwitchA", ""], ["15", "0", "SwitchB", ""]];

const ObjectCard = ({ item }) => (
  <Card $selected={item.selected}>
    <CardTitle>{item.name}</CardTitle>
    {item.sensors && <Sensors><ThermoIcon /><DropsIcon /></Sensors>}
    <CardFooter>
      {item.online ? <OnlineDot /> : <ClockIcon />}
      <CardTime>{item.time}</CardTime>
      {item.actions && <Actions><TargetIcon /><CollapseIcon /></Actions>}
    </CardFooter>
  </Card>
);

const ModbusWindow = () => (
  <Window>
    <TitleBar>
      1:unknown slave
      <CloseIcon width="9" height="9" viewBox="0 0 9 9"><path d="m1 1 7 7M8 1 1 8" stroke="#c9c5c0" strokeWidth="1.3" /></CloseIcon>
    </TitleBar>
    <Toolbar $pad="5px 5px 0">
      <SwingButton $width={80}>Import</SwingButton>
      <SwingButton $width={79}>Export</SwingButton>
      <Combo>
        <ComboValue>Modbus</ComboValue>
        <ComboArrow><Icon w={10} h={5} box="0 0 10 5"><path d="M0 0h10L5 5Z" fill="#333" /></Icon></ComboArrow>
      </Combo>
      <CheckBox><Icon size={9} box="0 0 9 9" stroke sw={1.8}><path d="M1.5 4v3.500L7.500 1.500" stroke="#333" /></Icon></CheckBox>
      <CheckLabel>Stay on top</CheckLabel>
    </Toolbar>
    <SwingTabs>
      {swingTabs.map(([name, width], i) => (
        <SwingTab key={name} $width={width} $first={i === 0} $active={name === "Coils"}>
          <TabCorner width="7" height="7" viewBox="0 0 7 7">
            <path d="M0 0h6L0 6Z" fill="#eee" /><path d="M.5 6 6 .5" stroke="#7a8a99" />
          </TabCorner>
          {name}
        </SwingTab>
      ))}
    </SwingTabs>
    <TabPane>
      <PaneBody>
        <Toolbar $pad="5px 5px 5px">
          {coilButtons.map(([name, width]) => <SwingButton key={name} $width={width}>{name}</SwingButton>)}
        </Toolbar>
        <TableBox>
          <TableLine $head>
            {["Address", "Value", "Name", "Binding"].map((h) => <TableCell key={h} $head>{h}</TableCell>)}
          </TableLine>
          {coils.map((row) => (
            <TableLine key={row[0]}>
              {row.map((value, i) => <TableCell key={i} $align={i === 0 ? "right" : "left"}>{value}</TableCell>)}
            </TableLine>
          ))}
        </TableBox>
      </PaneBody>
    </TabPane>
    <StatusLine>Adding coils completed.</StatusLine>
  </Window>
);

export default function App() {
  return (
    <Page>
      <GlobalStyle />
      <BrowserEdge />
      <Columns>
        <Sidebar>
          <MenuButton><MenuIcon /></MenuButton>
          {nav.map((NavIcon, i) => <NavItem key={i} $active={i === 1}><NavIcon /></NavItem>)}
          <SidebarFooter><ToolsIcon /></SidebarFooter>
        </Sidebar>

        <ObjectsPanel>
          <PanelTitle>Objects</PanelTitle>
          <Filters>
            <FilterField $height={25} $pad="0 6px 2px 10px" $inset={1}><span>Search ...</span><span>3 / 3</span></FilterField>
            <FilterField $height={27} $pad="0 14px 1px 8px"><span>All</span><Chevron color="#8ba0ae" /></FilterField>
          </Filters>
          <SortBy>Sort by<Chevron color="#5c6266" /></SortBy>
          <CardList>{objects.map((o) => <ObjectCard key={o.name} item={o} />)}</CardList>
          <AddButton>
            <Icon size={16} box="0 0 16 16" stroke sw={1.6}><path d="M8 1v14M1 8h14" stroke="#fff" /></Icon>
          </AddButton>
        </ObjectsPanel>

        <Details>
          <DetailsHeader>
            <DetailsTitle>mqtt-kovorotniy-oxkhxb</DetailsTitle>
            <Icon size={14} box="0 0 14 14" stroke sw={1.4}><path d="m1 1 12 12M13 1 1 13" stroke="#6cbfe0" /></Icon>
          </DetailsHeader>
          <Tabs>
            {tabs.map(([name, TabIcon]) => <Tab key={name} $active={name === "Commands"}><TabIcon />{name}</Tab>)}
          </Tabs>
          <SubTabs>
            <SubTab $width={129} $indent={8.5}>Commands (pr...</SubTab>
            <SubTab $width={126} $indent={23.5} $active>Commands</SubTab>
          </SubTabs>
          <CommandGrid>
            {commands.map((name) => (
              <CommandCard key={name}><CommandName>{name}</CommandName><ExecuteButton>Execute</ExecuteButton></CommandCard>
            ))}
          </CommandGrid>
          <Status>
            <StatusBadge><BulbIcon /></StatusBadge>
            <div>Status: <b>Complete</b></div>
            <div>Time: <b>0.56 secs</b></div>
          </Status>
          <ReportTitle>Report</ReportTitle>
          <ReportRow>
            <ReportCell $width="35px" $align="center">1</ReportCell>
            <ReportCell $width="141px" $align="center">13/09/2019 14:20:36</ReportCell>
            <ReportCell $width="auto" $pad={13}>Command was sent</ReportCell>
          </ReportRow>
        </Details>

        <MapSide>
          <MapTabs>
            {["Map", "Table", "Bot", "Grafana"].map((name) => <MapTab key={name} $active={name === "Map"}>{name}</MapTab>)}
          </MapTabs>
          <MapArea>
            <MapDrawing />
            <MapTools>
              <MapTool $radius="2px 2px 0 0"><Icon size={11} box="0 0 11 11" stroke sw={2.2}><path d="M5.5 1v9M1 5.500h9" /></Icon></MapTool>
              <MapTool $gap={1} $radius="0 0 2px 2px"><Icon w={8} h={4} box="0 0 8 4"><path d="M0 .3h8v3.400H0z" /></Icon></MapTool>
              <MapTool $gap={10}>
                <Icon size={18} stroke sw={1.1}>
                  <g stroke="#7f97a6"><path d="M5 1.500 17 13l-4 3.800L1 5.300Z" /><path d="m7 3.600-1.500 1.500M9.200 5.700 8.400 6.500M11.300 7.800 9.800 9.300M13.500 9.800l-.8.8" /></g>
                </Icon>
              </MapTool>
            </MapTools>
            <LayerPicker>Open Street Map</LayerPicker>
          </MapArea>
        </MapSide>
      </Columns>

      <ModbusWindow />
      <Cursor width="14" height="21" viewBox="0 0 14 21">
        <path d="M2.5 2v14.500l3.300-3 2.300 5.300 2.700-1.200-2.300-5.100h4.300Z" fill="#1d1f20" stroke="#fff" strokeWidth="1.2" />
      </Cursor>
    </Page>
  );
}
